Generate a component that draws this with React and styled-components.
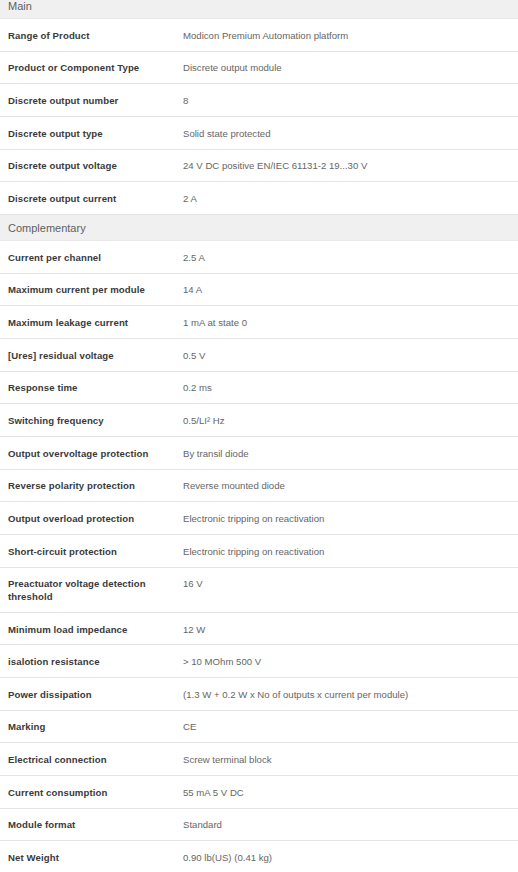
import React from "react";
import styled, { createGlobalStyle } from "styled-components";

const Global = createGlobalStyle`
  html, body { margin: 0; padding: 0; background: #ffffff; }
  body { font-family: "Liberation Sans", Arial, sans-serif; overflow: hidden; }
`;

const Page = styled.div`
  width: 518px;
  margin-top: -7px;
`;

const SectionHeader = styled.div`
  height: 26px;
  display: flex;
  align-items: center;
  padding: 1px 8px 0;
  background: #f0f0f0;
  color: #5f5f5f;
  font-size: 11px;
  border-bottom: 1px solid #e8e8e8;
  box-sizing: border-box;
`;

const Row = styled.div`
  display: grid;
  grid-template-columns: 175px 1fr;
  border-bottom: 1px solid #e4e4e4;
  padding: 10.7px 0 8.3px;
`;

const Label = styled.div`
  padding: 0 8px;
  font-size: 9.6px;
  line-height: 12.67px;
  font-weight: 700;
  letter-spacing: 0.1px;
  color: #3a3a3a;
`;

const Value = styled.div`
  padding: 0 8px;
  font-size: 9.6px;
  line-height: 12.67px;
  color: #666666;
`;

const sections = [
  {
    title: "Main",
    rows: [
      ["Range of Product", "Modicon Premium Automation platform"],
      ["Product or Component Type", "Discrete output module"],
      ["Discrete output number", "8"],
      ["Discrete output type", "Solid state protected"],
      ["Discrete output voltage", "24 V DC positive EN/IEC 61131-2 19...30 V"],
      ["Discrete output current", "2 A"],
    ],
  },
  {
    title: "Complementary",
    rows: [
      ["Current per channel", "2.5 A"],
      ["Maximum current per module", "14 A"],
      ["Maximum leakage current", "1 mA at state 0"],
      ["[Ures] residual voltage", "0.5 V"],
      ["Response time", "0.2 ms"],
      ["Switching frequency", "0.5/LI² Hz"],
      ["Output overvoltage protection", "By transil diode"],
      ["Reverse polarity protection", "Reverse mounted diode"],
      ["Output overload protection", "Electronic tripping on reactivation"],
      ["Short-circuit protection", "Electronic tripping on reactivation"],
      ["Preactuator voltage detection threshold", "16 V"],
      ["Minimum load impedance", "12 W"],
      ["isalotion resistance", "> 10 MOhm 500 V"],
      ["Power dissipation", "(1.3 W + 0.2 W x No of outputs x current per module)"],
      ["Marking", "CE"],
      ["Electrical connection", "Screw terminal block"],
      ["Current consumption", "55 mA 5 V DC"],
      ["Module format", "Standard"],
      ["Net Weight", "0.90 lb(US) (0.41 kg)"],
    ],
  },
];

export default function App() {
  return (
    <>
      <Global />
      <Page>
        {sections.map((s) => (
          <section key={s.title}>
            <SectionHeader>{s.title}</SectionHeader>
            {s.rows.map(([l, v]) => (
              <Row key={l}>
                <Label>{l}</Label>
                <Value>{v}</Value>
              </Row>
            ))}
          </section>
        ))}
      </Page>
    </>
  );
}
